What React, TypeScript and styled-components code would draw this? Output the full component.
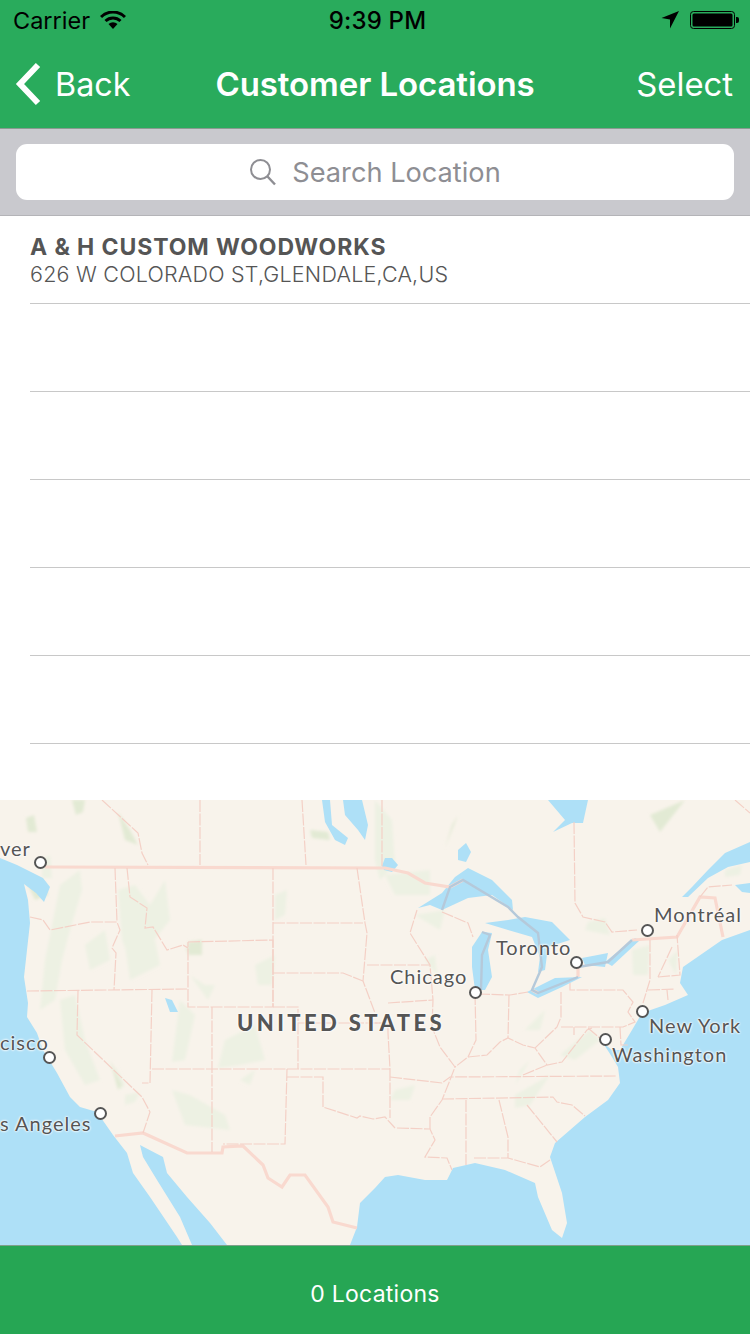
import React from "react";
import styled, { createGlobalStyle } from "styled-components";

const Global = createGlobalStyle`
  html, body { margin: 0; padding: 0; background: #fff; }
  #root { width: 750px; height: 1334px; }
`;
const SF = `Inter, Roboto, "Liberation Sans", sans-serif`;
const Page = styled.div`
  width: 750px; height: 1334px; display: flex; flex-direction: column;
  overflow: hidden; font-family: ${SF};
`;
const Header = styled.header`
  background: #29ab5c; height: 129px; box-sizing: border-box; flex: none; display: flex; flex-direction: column;
  border-bottom: 1px solid #8a9a90;
`;
const StatusBar = styled.div`
  height: 40px; flex: none; padding: 0 11px 0 13px; display: grid; grid-template-columns: 1fr auto 1fr;
  align-items: center; color: #000; font-size: 23.5px;
`;
const StatusGroup = styled.div<{ $end?: boolean }>`
  display: flex; align-items: center; gap: 10px; justify-content: ${p => (p.$end ? "flex-end" : "flex-start")};
`;
const Clock = styled.div`font-size: 24px; font-weight: 500; letter-spacing: 0.2px; margin-left: 3px;`;
const NavBar = styled.div`
  flex: 1; display: grid; grid-template-columns: 1fr auto 1fr; align-items: center;
  padding: 0 13px; color: #fff;
`;
const BackButton = styled.div`display: flex; align-items: center; gap: 10px; font-size: 32.3px;`;
const Title = styled.div`font-size: 33px; font-weight: 600; letter-spacing: -0.08px;`;
const SelectButton = styled.div`font-size: 32.8px; justify-self: end; margin-right: 4px;`;
const SearchBar = styled.div`
  height: 87px; flex: none; background: #c9c9ce; padding: 15px 16px; box-sizing: border-box;
  border-bottom: 1px solid #b4b4b8;
`;
const SearchField = styled.div`
  height: 56px; background: #fff; border-radius: 11px; display: flex; align-items: center;
  justify-content: center; gap: 15px; color: #8e8e93; font-size: 27.2px; letter-spacing: 0;
`;
const List = styled.div`height: 584px; flex: none; background: #fff;`;
const Row = styled.div`
  height: 88px; margin-left: 30px; box-sizing: border-box; border-bottom: 1px solid #c8c8c8;
  padding-top: 18px; display: flex; flex-direction: column; color: #555;
`;
const RowTitle = styled.div`font-size: 23px; font-weight: 700; line-height: 27px; letter-spacing: 0.9px;`;
const RowAddress = styled.div`font-size: 21.5px; font-weight: 300; line-height: 26px; letter-spacing: 0.22px;`;
const MapArea = styled.div`position: relative; height: 445px; flex: none; overflow: hidden; background: #f8f3eb;`;
const MapSvg = styled.svg`display: block; width: 750px; height: 445px;`;
const Dot = styled.div<{ $x: number; $y: number }>`
  position: absolute; left: ${p => p.$x - 6.5}px; top: ${p => p.$y - 806.5}px; width: 13px; height: 13px;
  box-sizing: border-box; border-radius: 50%; background: #fff; border: 2px solid #555;
`;
const Label = styled.div<{ $x: number; $y: number }>`
  position: absolute; left: ${p => p.$x}px; top: ${p => p.$y - 813}px; line-height: 24px; height: 24px;
  font-family: Lato, "Open Sans", sans-serif; font-size: 20px; letter-spacing: 1px; color: #555; white-space: nowrap;
  text-shadow: 0 0 2px #fff, 0 0 2px #fff, 0 0 3px #fff;
`;
const CountryLabel = styled(Label)`font-size: 22px; font-weight: 900; letter-spacing: 3.4px; color: #555;`;
const Footer = styled.div`
  flex: 1; background: #26a654; color: #fff; display: flex; align-items: center; justify-content: center;
  font-size: 23px; letter-spacing: 0.25px; border-top: 1px solid #7fa08a; padding-top: 8px; box-sizing: border-box;
`;

const WATER = "#aee0f7";
const water = [
  "0,858 17,865 33,873 43,878 50,887 44,902 36,893 24,884 28,900 30,923 27,950 24,977 28,1003 27,1017 37,1033 43,1050 57,1073 70,1097 80,1107 97,1112 113,1135 127,1153 133,1173 150,1197 177,1237 182,1245 0,1245",
  "140,1145 163,1157 167,1173 187,1197 210,1223 227,1245 192,1245 180,1217 157,1180 143,1157",
  "350,1245 357,1227 360,1203 375,1188 385,1177 398,1175 425,1180 447,1180 453,1168 475,1163 505,1170 535,1183 538,1197 552,1230 562,1238 567,1223 562,1193 550,1157 555,1143 585,1117 608,1100 620,1083 618,1067 612,1057 603,1043 612,1050 620,1050 632,1030 642,1013 665,1005 688,995 680,983 683,967 722,940 750,930 750,1245",
  "750,842 725,853 708,870 692,887 682,897 688,897 708,878 728,867 750,862",
  "735,885 750,883 750,893 742,892",
  "548,800 588,800 583,823 572,823 553,832 565,820",
  "418,908 442,893 455,877 468,868 492,880 512,900 513,910 492,895 468,898 442,910 430,905",
  "472,947 482,932 492,933 488,950 492,977 485,990 475,990 472,967",
  "485,923 508,920 525,917 552,922 570,940 548,947 545,970 538,972 540,957 532,937 508,930",
  "527,992 555,978 582,977 562,987 538,998",
  "582,958 608,953 605,967 585,965",
  "605,962 635,938 640,940 612,966",
  "322,800 330,800 332,825 348,838 345,845 335,840 325,822",
  "343,800 362,800 368,825 365,840 358,830 345,815",
  "382,866 385,858 392,858 398,865 392,872 384,870",
  "458,850 466,843 471,852 466,862 458,860",
  "165,998 172,1000 178,1012 170,1012",
];
const strongForests = [
  "72,800 85,800 83,812 76,815", "26,818 34,815 37,832 28,832", "118,812 130,830 138,845 125,840",
  "310,830 328,832 330,840 312,838", "188,942 202,940 202,955 188,955", "28,885 45,882 48,895 35,900",
  "110,1060 122,1085 118,1090", "185,950 200,940 200,955", "650,815 685,800 660,832", "452,825 458,815 445,848",
];
const forests = [
  "42,860 50,855 52,878 42,878", "60,885 80,870 82,890 70,930 62,960 55,1000 40,1010 45,960",
  "118,890 135,885 150,905 165,880 170,920 150,945 130,960 122,940", "85,945 105,930 110,960 90,970", "125,945 155,940 160,965 130,980",
  "255,965 275,955 272,985 258,985", "275,895 287,890 285,915 275,920",
  "190,975 205,985 215,985 208,1000", "180,1000 195,1015 185,1060 172,1062",
  "225,1040 255,1025 265,1060 240,1065 218,1068", "240,1080 255,1070 250,1085",
  "60,1000 75,995 85,1040 100,1080 85,1085 65,1050", "115,1065 125,1085 120,1090",
  "125,1095 140,1092 135,1102 125,1105", "172,1090 190,1095 225,1115 230,1130 185,1125",
  "375,800 392,820 395,865 380,880 375,860", "385,875 430,870 430,895 395,895", "415,915 445,910 440,930",
  "425,960 435,955 437,975", "588,922 605,918 610,935 585,930",
  "632,950 650,945 648,975 633,975", "668,960 678,950 676,975",
  "525,1030 545,1010 540,1030", "560,1055 590,1030 600,1040 575,1060", "520,1070 530,1060 515,1085",
  "515,1095 550,1075 530,1105 515,1108", "395,1090 415,1085 410,1100 390,1100",
  "725,870 742,865 740,875 725,877", "548,1235 558,1237 560,1244 552,1240",
];
const thick = [
  "45,867 385,868 408,873 425,883 450,887 463,880",
  "532,990 538,993", "578,977 578,967", "632,940 677,937 700,897 715,898 723,937",
  "115,1136 143,1133 187,1153 222,1153 223,1147 243,1146 263,1165 268,1178 282,1187 290,1175 305,1175 328,1207 333,1222 357,1228",
];
const lakeLines = [
  "442,910 450,887 463,880 508,907 518,917 538,933 542,967 532,990 538,993 578,977",
  "482,932 490,935 482,955 481,990", "578,967 608,962 632,940",
];
const borders = [
  "115,868 117,922", "30,917 43,920 50,930 90,922 117,922 120,930 112,948 116,953 114,990",
  "127,868 130,897 147,908 145,928 153,927 167,950 183,945 188,948", "188,942 273,940 273,1007 188,1007 188,942",
  "273,868 273,1007", "273,923 363,923", "357,868 365,923 367,933 363,981 375,1013", "273,973 343,973 363,981",
  "273,1007 298,1007 298,1069", "152,1069 390,1069", "298,1023 388,1023 388,1033 390,1069",
  "367,965 430,965", "27,991 187,989", "152,990 150,1083 142,1083",
  "78,991 77,1035 142,1097 150,1112 143,1133", "212,1007 212,1152", "287,1069 285,1144 223,1144",
  "287,1077 323,1077 323,1107 357,1118 360,1116 373,1119 385,1117 395,1128",
  "390,1077 442,1083 450,1077 617,1076", "390,1069 390,1118", "397,1128 430,1129 435,1140 425,1157 447,1158 452,1170",
  "430,1129 430,1117 442,1100 450,1080 455,1067", "442,1099 553,1097 557,1102 572,1105 585,1116",
  "466,1100 466,1165", "499,1100 508,1137 508,1158", "474,1158 508,1158 540,1167 550,1160", "527,1105 557,1142",
  "475,993 476,1040 468,1057 455,1067 440,1047 432,1027 433,1000 430,965 410,933 417,910",
  "442,912 468,923 473,937", "388,1003 433,1000", "478,994 510,995 528,992", "509,995 508,1038",
  "561,992 561,1017 557,1027 535,1048", "468,1057 487,1055 500,1042 508,1038 523,1045 535,1048 547,1065 562,1062 587,1030 592,1028",
  "523,1075 547,1065", "570,983 570,990 623,990 633,1002 628,1012 635,1022 623,1027 561,1027",
  "650,940 650,980 643,1003", "658,977 680,975 677,935", "672,947 658,977", "648,990 675,989", "667,990 668,1000",
  "574,822 575,903 583,917 605,922 612,932 637,930", "620,1027 621,1045 628,1045", "574,1027 574,1035", "588,1028 602,1040",
  "200,800 200,865", "302,800 306,865", "102,800 138,833 142,853 148,865", "382,800 382,867",
  "700,897 708,887 732,885", "735,800 750,813", "375,1023 388,1023",
];
const pins: [number, number][] = [[40, 862], [49, 1057], [100, 1113], [475, 992], [576, 962], [647, 930], [642, 1011], [605, 1039]];
const labels: [string, number, number][] = [
  ["ver", 0, 849], ["cisco", 0, 1043], ["s Angeles", 0, 1124], ["Chicago", 390, 977],
  ["Toronto", 496, 948], ["Montréal", 654, 915], ["New York", 649, 1026], ["Washington", 612, 1055],
];

function WorldMap() {
  return (
    <MapSvg viewBox="0 800 750 445">
      <defs><filter id="soft"><feGaussianBlur stdDeviation="1.6" /></filter></defs>
      <g fill="#edf1e3" filter="url(#soft)">{forests.map((p, i) => <polygon key={i} points={p} />)}</g>
      <g fill="#e2ead4" filter="url(#soft)">{strongForests.map((p, i) => <polygon key={i} points={p} />)}</g>
      <g fill={WATER}>{water.map((p, i) => <polygon key={i} points={p} />)}</g>
      <g fill="none" stroke="#f9d9cf" strokeWidth="3.2">{thick.map((p, i) => <polyline key={i} points={p} />)}</g>
      <g fill="none" stroke="#b5c9da" strokeWidth="2.4">{lakeLines.map((p, i) => <polyline key={i} points={p} />)}</g>
      <g fill="none" stroke="#f4d0c6" strokeWidth="1.2" strokeDasharray="12 1.5">{borders.map((p, i) => <polyline key={i} points={p} />)}</g>
    </MapSvg>
  );
}

export default function App() {
  const rows = [0, 1, 2, 3, 4, 5];
  return (
    <Page>
      <Global />
      <Header>
        <StatusBar>
          <StatusGroup>
            Carrier
            <svg width="26" height="18" viewBox="0 0 26 18">
              <path d="M1 6 A17 17 0 0 1 25 6" fill="none" stroke="#000" strokeWidth="3" />
              <path d="M5.5 10 A11 11 0 0 1 20.5 10" fill="none" stroke="#000" strokeWidth="3" />
              <path d="M8.5 13 A7 7 0 0 1 17.5 13 L13 18 Z" fill="#000" />
            </svg>
          </StatusGroup>
          <Clock>9:39 PM</Clock>
          <StatusGroup $end>
            <svg width="19" height="18" viewBox="0 0 19 18"><path d="M18 0 L9 17.5 L9 8.5 L0.5 7 Z" fill="#000" /></svg>
            <svg width="49" height="18" viewBox="0 0 49 18">
              <rect x="0.5" y="0.5" width="44" height="17" rx="3" fill="none" stroke="#000" strokeWidth="1" />
              <rect x="2.5" y="2.5" width="40" height="13" rx="1.5" fill="#000" />
              <path d="M46 6 h1 a2 2 0 0 1 2 2 v2 a2 2 0 0 1 -2 2 h-1 Z" fill="#000" />
            </svg>
          </StatusGroup>
        </StatusBar>
        <NavBar>
          <BackButton>
            <svg width="32" height="44" viewBox="0 0 32 44">
              <path d="M25 3 L7 22 L25 41" fill="none" stroke="#fff" strokeWidth="6" />
            </svg>
            Back
          </BackButton>
          <Title>Customer Locations</Title>
          <SelectButton>Select</SelectButton>
        </NavBar>
      </Header>
      <SearchBar>
        <SearchField>
          <svg width="28" height="28" viewBox="0 0 28 28">
            <circle cx="11.5" cy="11.5" r="9.5" fill="none" stroke="#8e8e93" strokeWidth="2" />
            <path d="M18.5 18.5 L26 26.5" stroke="#8e8e93" strokeWidth="2.4" />
          </svg>
          Search Location
        </SearchField>
      </SearchBar>
      <List>
        {rows.map(i => (
          <Row key={i}>
            {i === 0 && <RowTitle>A &amp; H CUSTOM WOODWORKS</RowTitle>}
            {i === 0 && <RowAddress>626 W COLORADO ST,GLENDALE,CA,US</RowAddress>}
          </Row>
        ))}
      </List>
      <MapArea>
        <WorldMap />
        {pins.map(([x, y]) => <Dot key={x} $x={x} $y={y} />)}
        {labels.map(([t, x, y]) => <Label key={t} $x={x} $y={y}>{t}</Label>)}
        <CountryLabel $x={237} $y={1024}>UNITED STATES</CountryLabel>
      </MapArea>
      <Footer>0 Locations</Footer>
    </Page>
  );
}
